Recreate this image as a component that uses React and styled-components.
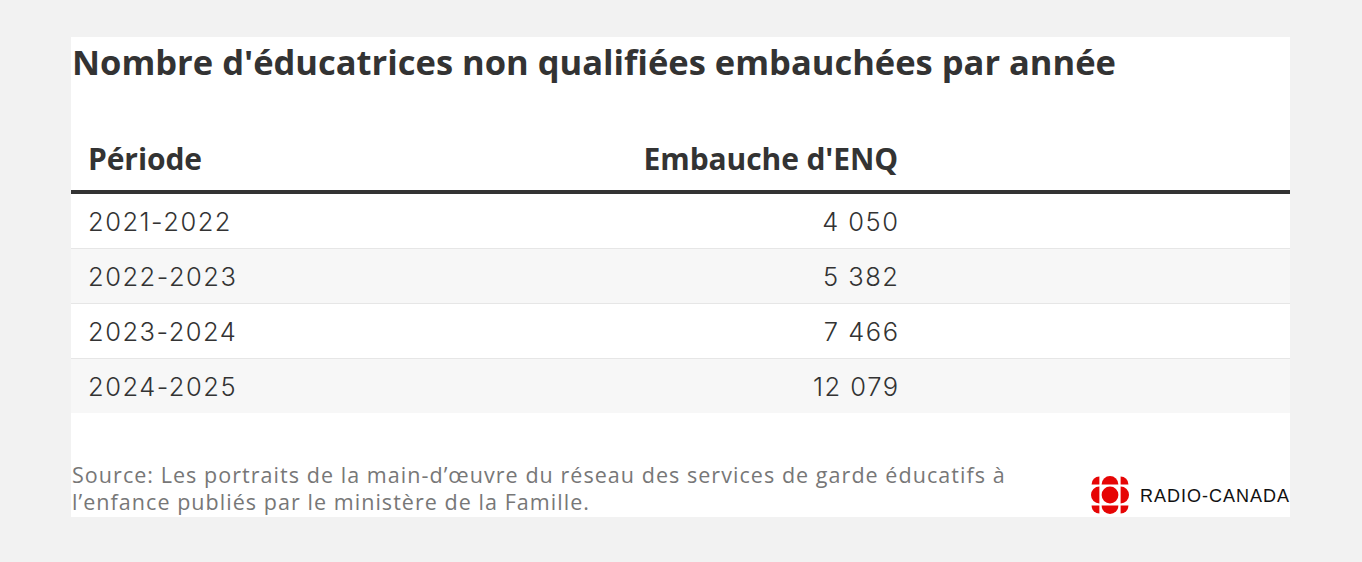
import React from 'react';
import styled, { createGlobalStyle } from 'styled-components';

const Global = createGlobalStyle`
  body {
    margin: 0;
    background: #f2f2f2;
  }
`;

const Page = styled.div`
  padding: 37px 72px 46px 71px;
`;

const Card = styled.div`
  background: #fff;
  width: 1219px;
  font-family: "Open Sans", "Noto Sans", sans-serif;
  color: #333;
`;

const Title = styled.h1`
  margin: 0;
  padding: 2px 0 0 1px;
  font-size: 34.5px;
  line-height: 46px;
  font-weight: 700;
  color: #333;
`;

const Table = styled.div`
  margin-top: 46px;
`;

const Row = styled.div`
  display: grid;
  grid-template-columns: 422px 422px 1fr;
  align-items: center;
  height: ${p => (p.$head ? '59px' : '54px')};
  background: ${p => (p.$alt ? '#f7f7f7' : '#fff')};
  border-bottom: ${p => (p.$head ? '4px solid #333' : p.$last ? 'none' : '1px solid #e6e6e6')};
`;

const Cell = styled.div`
  padding: 0 17px;
  text-align: ${p => (p.$num ? 'right' : 'left')};
  font-family: ${p => (p.$head ? '"Open Sans", sans-serif' : 'Inter, Lato, sans-serif')};
  font-size: ${p => (p.$head ? '30px' : '25.5px')};
  font-weight: ${p => (p.$head ? 700 : 300)};
  color: #333;
  letter-spacing: ${p => (p.$head ? '-0.1px' : '1.5px')};
  padding-right: ${p => (p.$head || !p.$num ? '17px' : '15.5px')};
  padding-bottom: ${p => (p.$head ? '4px' : '0')};
`;

const Footer = styled.div`
  display: flex;
  align-items: flex-end;
  justify-content: space-between;
  padding: 48px 0 2px 1px;
`;

const Source = styled.p`
  margin: 0;
  width: 960px;
  font-size: 21.5px;
  line-height: 27px;
  letter-spacing: 1.05px;
  color: #777;
`;

const Logo = styled.div`
  display: flex;
  align-items: center;
  gap: 11px;
  margin-bottom: 1px;
`;

const Wordmark = styled.span`
  font-family: "Liberation Sans", Arial, sans-serif;
  font-size: 18px;
  letter-spacing: 1px;
  color: #111;
  padding-top: 3px;
`;

const rows = [
  ['2021-2022', '4 050'],
  ['2022-2023', '5 382'],
  ['2023-2024', '7 466'],
  ['2024-2025', '12 079'],
];

const Gem = () => (
  <svg width="38" height="38" viewBox="16 16 68 68">
    <g fill="#e60505">
      <circle cx="50" cy="50" r="15" />
      <path d="M35 31 A15 15 0 0 1 65 31 Z" />
      <path d="M35 69 A15 15 0 0 0 65 69 Z" />
      <path d="M31 35 A15 15 0 0 0 31 65 Z" />
      <path d="M69 35 A15 15 0 0 1 69 65 Z" />
      <path d="M31 31 L31 17 A14 14 0 0 0 17 31 Z" />
      <path d="M69 31 L69 17 A14 14 0 0 1 83 31 Z" />
      <path d="M31 69 L31 83 A14 14 0 0 1 17 69 Z" />
      <path d="M69 69 L69 83 A14 14 0 0 0 83 69 Z" />
    </g>
  </svg>
);

export default function App() {
  return (
    <Page>
      <Global />
      <Card>
        <Title>Nombre d'éducatrices non qualifiées embauchées par année</Title>
        <Table>
          <Row $head>
            <Cell $head>Période</Cell>
            <Cell $head $num>Embauche d'ENQ</Cell>
            <div />
          </Row>
          {rows.map(([period, value], i) => (
            <Row key={period} $alt={i % 2 === 1} $last={i === rows.length - 1}>
              <Cell>{period}</Cell>
              <Cell $num>{value}</Cell>
              <div />
            </Row>
          ))}
        </Table>
        <Footer>
          <Source>
            Source: Les portraits de la main-d’œuvre du réseau des services de garde éducatifs à
            l’enfance publiés par le ministère de la Famille.
          </Source>
          <Logo>
            <Gem />
            <Wordmark>RADIO-CANADA</Wordmark>
          </Logo>
        </Footer>
      </Card>
    </Page>
  );
}
